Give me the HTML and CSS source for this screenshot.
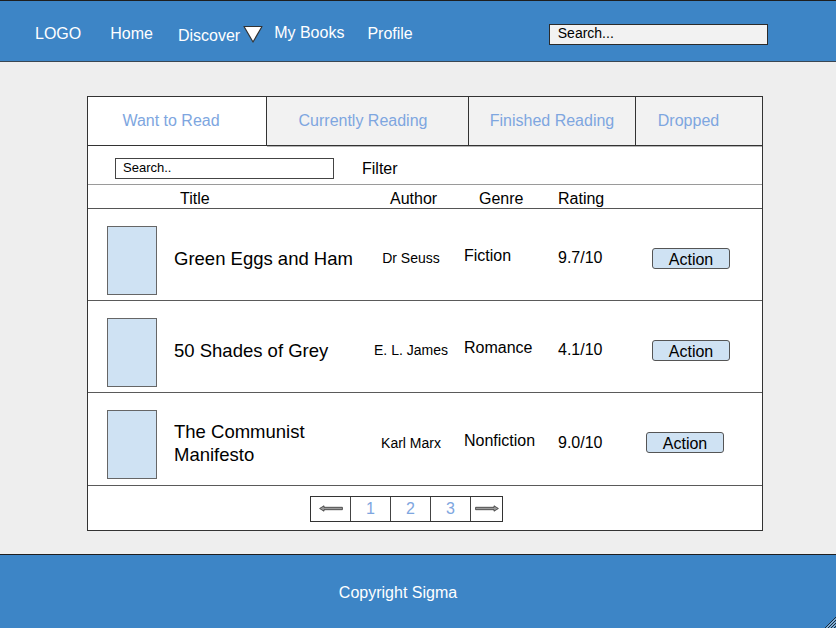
FILE: index.html
```html
<!DOCTYPE html>
<html lang="en">
<head>
<meta charset="utf-8">
<title>Books</title>
<link rel="stylesheet" href="styles.css">
</head>
<body>
<header class="topbar">
  <span class="nav-item logo">LOGO</span>
  <span class="nav-item home">Home</span>
  <span class="nav-item discover">Discover</span>
  <svg class="caret" width="20" height="18" viewBox="0 0 20 18"><polygon points="1,1.5 19,1.5 10,17" fill="#ffffff" stroke="#333333" stroke-width="1.2" stroke-linejoin="round"/></svg>
  <span class="nav-item mybooks">My Books</span>
  <span class="nav-item profile">Profile</span>
  <div class="top-search">Search...</div>
</header>

<main class="content">
  <section class="card">
    <div class="tabs">
      <div class="tab tab-want active">Want to Read</div>
      <div class="tab tab-current">Currently Reading</div>
      <div class="tab tab-finished">Finished Reading</div>
      <div class="tab tab-dropped">Dropped</div>
    </div>

    <div class="filter-row">
      <div class="filter-search">Search..</div>
      <span class="filter-label">Filter</span>
    </div>

    <div class="table-head">
      <span></span>
      <span class="h-title">Title</span>
      <span class="h-author">Author</span>
      <span class="h-genre">Genre</span>
      <span class="h-rating">Rating</span>
      <span></span>
    </div>

    <div class="book-row">
      <div class="cover"></div>
      <div class="b-title">Green Eggs and Ham</div>
      <div class="b-author">Dr Seuss</div>
      <div class="b-genre">Fiction</div>
      <div class="b-rating">9.7/10</div>
      <div class="b-action"><span class="action-btn">Action</span></div>
    </div>

    <div class="book-row">
      <div class="cover"></div>
      <div class="b-title">50 Shades of Grey</div>
      <div class="b-author">E. L. James</div>
      <div class="b-genre">Romance</div>
      <div class="b-rating">4.1/10</div>
      <div class="b-action"><span class="action-btn">Action</span></div>
    </div>

    <div class="book-row last">
      <div class="cover"></div>
      <div class="b-title">The Communist Manifesto</div>
      <div class="b-author">Karl Marx</div>
      <div class="b-genre">Nonfiction</div>
      <div class="b-rating">9.0/10</div>
      <div class="b-action shift"><span class="action-btn">Action</span></div>
    </div>

    <div class="pager-row">
      <div class="pager">
        <div class="page-cell arrow c-prev"><svg width="24" height="7" viewBox="0 0 24 7"><polygon points="0.6,3.5 5,0.8 5,2.3 23.4,2.3 23.4,4.7 5,4.7 5,6.2" fill="#9a9a9a" stroke="#333333" stroke-width="0.8"/></svg></div>
        <div class="page-cell c-num">1</div>
        <div class="page-cell c-num">2</div>
        <div class="page-cell c-num">3</div>
        <div class="page-cell arrow c-next"><svg width="24" height="7" viewBox="0 0 24 7"><polygon points="23.4,3.5 19,0.8 19,2.3 0.6,2.3 0.6,4.7 19,4.7 19,6.2" fill="#9a9a9a" stroke="#333333" stroke-width="0.8"/></svg></div>
      </div>
    </div>
  </section>
</main>

<footer class="footer">
  <span class="copyright">Copyright Sigma</span>
  <svg class="grip" width="12" height="12" viewBox="0 0 12 12"><path d="M12 1 L1 12 M12 4 L4 12 M12 7 L7 12 M12 10 L10 12" stroke="#1b2b3a" stroke-width="1"/><path d="M12 2.5 L2.5 12 M12 5.5 L5.5 12 M12 8.5 L8.5 12" stroke="#d8e4ee" stroke-width="0.8"/></svg>
</footer>
</body>
</html>
```

FILE: styles.css
```css
* { box-sizing: border-box; }

html, body {
  margin: 0;
  padding: 0;
}

body {
  width: 836px;
  height: 628px;
  overflow: hidden;
  display: flex;
  flex-direction: column;
  background: #eeeeee;
  font-family: "Liberation Sans", Arial, sans-serif;
  color: #000;
}

/* ---------- header ---------- */
.topbar {
  height: 62px;
  flex: none;
  display: flex;
  align-items: center;
  padding: 6px 0 0 35px;
  background: #3d85c6;
  border-top: 1px solid #1e1e1e;
  border-bottom: 1px solid #3a4652;
  color: #ffffff;
  font-size: 16px;
}

.nav-item { white-space: nowrap; line-height: 18px; }
.home { margin-left: 29px; }
.discover { margin-left: 25px; padding-top: 3px; }
.caret { margin-left: 3px; flex: none; }
.mybooks { margin-left: 11px; padding-bottom: 2px; }
.profile { margin-left: 23px; }

.top-search {
  margin-left: 136px;
  width: 219px;
  height: 21px;
  padding-left: 8px;
  background: #f2f2f2;
  border: 1px solid #2b2b2b;
  color: #000;
  font-size: 14px;
  line-height: 17px;
}

/* ---------- main ---------- */
.content {
  flex: 1;
  padding-top: 34px;
}

.card {
  width: 676px;
  margin-left: 87px;
  background: #ffffff;
  border: 1px solid #333333;
}

.tabs {
  display: flex;
  height: 49px;
}

.tab {
  height: 49px;
  display: flex;
  align-items: center;
  justify-content: center;
  background: #f2f2f2;
  border-bottom: 1px solid #333333;
  border-right: 1px solid #333333;
  box-shadow: 0 1px 0 #b5b5b5;
  color: #7ea6e0;
  font-size: 16px;
}

.tab.active { background: #ffffff; box-shadow: none; }
.tab-want { width: 179px; padding-right: 12px; }
.tab-current { width: 202px; padding-right: 9px; }
.tab-finished { width: 167px; }
.tab-dropped { flex: 1; border-right: none; padding-right: 21px; }

.filter-row {
  height: 39px;
  display: flex;
  align-items: center;
  padding: 7px 0 0 27px;
  border-bottom: 1px solid #9a9a9a;
}

.filter-search {
  width: 219px;
  height: 21px;
  padding-left: 7px;
  border: 1px solid #444444;
  font-size: 13px;
  line-height: 18px;
}

.filter-label {
  margin-left: 28px;
  font-size: 16px;
}

/* ---------- table ---------- */
.table-head,
.book-row {
  display: grid;
  grid-template-columns: 67px 191px 92px 101px 94px 1fr;
  padding-left: 19px;
}

.table-head {
  height: 24px;
  align-items: center;
  border-bottom: 1px solid #555555;
  font-size: 16px;
  line-height: 23px;
}

.h-title { padding-left: 6px; padding-top: 2px; }
.h-author { padding-left: 25px; padding-top: 2px; }
.h-genre { padding-left: 22px; padding-top: 2px; }
.h-rating { padding-top: 2px; }

.book-row {
  height: 92px;
  padding-top: 7px;
  align-items: center;
  border-bottom: 1px solid #5a5a5a;
}

.book-row.last { height: 93px; }

.cover {
  align-self: start;
  margin-top: 10px;
  width: 50px;
  height: 69px;
  background: #cfe2f3;
  border: 1px solid #666666;
}

.b-title {
  font-size: 18.5px;
  line-height: 23px;
}

.b-author {
  text-align: center;
  font-size: 14px;
  white-space: nowrap;
}

.b-genre {
  padding-left: 7px;
  padding-bottom: 4px;
  font-size: 16px;
}

.b-rating { font-size: 16px; }

.b-action.shift { margin-left: -6px; }

.action-btn {
  display: inline-block;
  width: 78px;
  height: 21px;
  background: #cfe2f3;
  border: 1px solid #555555;
  border-radius: 3px;
  text-align: center;
  font-size: 16px;
  line-height: 21px;
}

/* ---------- pager ---------- */
.pager-row {
  height: 44px;
  display: flex;
  align-items: center;
  padding: 1px 0 0 222px;
}

.pager {
  display: flex;
  height: 26px;
  border: 1px solid #333333;
}

.page-cell {
  display: flex;
  align-items: center;
  justify-content: center;
  border-left: 1px solid #444444;
  color: #7ea6e0;
  font-size: 16px;
}

.page-cell:first-child { border-left: none; }
.c-prev { width: 39px; }
.c-num { width: 40px; }
.c-next { width: 32px; }

/* ---------- footer ---------- */
.footer {
  position: relative;
  flex: none;
  height: 74px;
  display: flex;
  align-items: center;
  justify-content: center;
  padding: 3px 40px 0 0;
  background: #3d85c6;
  border-top: 1px solid #1e1e1e;
  color: #ffffff;
  font-size: 16px;
}

.grip {
  position: absolute;
  right: 0;
  bottom: 0;
}
```
